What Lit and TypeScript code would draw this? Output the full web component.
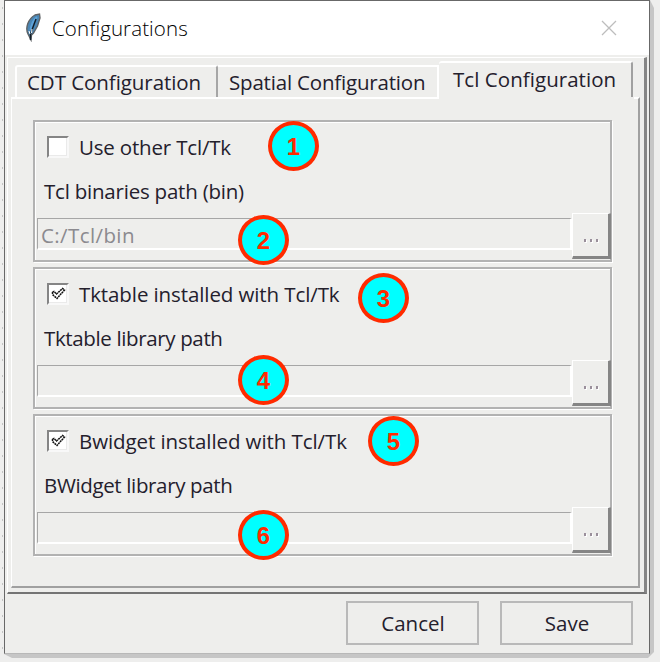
import { LitElement, html, css, svg } from "lit";
import { customElement } from "lit/decorators.js";
import { styleMap } from "lit/directives/style-map.js";

interface Section {
  option: string;
  checked: boolean;
  path: string;
  value: string;
  optionSpacing: number;
  pathSpacing: number;
}

const sections: Section[] = [
  { option: "Use other Tcl/Tk", checked: false, path: "Tcl binaries path (bin)", value: "C:/Tcl/bin", optionSpacing: -0.18, pathSpacing: -0.22 },
  { option: "Tktable installed with Tcl/Tk", checked: true, path: "Tktable library path", value: "", optionSpacing: -0.1, pathSpacing: -0.36 },
  { option: "Bwidget installed with Tcl/Tk", checked: true, path: "BWidget library path", value: "", optionSpacing: -0.08, pathSpacing: -0.36 },
];

// Callout pins: centre of each numbered marker.
const pins = [
  [293, 146], [263, 240], [383, 298], [263, 380], [393, 441], [263, 535],
];

@customElement("app-root")
export class AppRoot extends LitElement {
  static styles = css`
    :host { display: block; position: relative; width: 660px; height: 662px; overflow: hidden; background: #eeeeed;
      font-family: "Open Sans", "Noto Sans", sans-serif; font-size: 20.5px; color: #24202c; }
    * { box-sizing: border-box; }
    .desk { height: 662px; padding-left: 4px; background: radial-gradient(circle at 2.5px 8px, #c4c4c4 0.8px, transparent 1px) 0 0 / 4px 16px repeat-y; }
    .window { width: 646px; height: 654px; border: 1px solid #686868; border-bottom: 1px solid #b8b8b8; background: #eeeeec;
      box-shadow: 2px 2px 0 2px #c6c6c6; clip-path: polygon(0 0, 646px 0, 650px 8px, 650px 652px, 644px 658px, 8px 658px, 0 654px); }
    .title { height: 54px; background: #fff; display: flex; align-items: center; padding: 0 31px 0 19px; }
    .feather { width: 18px; height: 30px; margin-top: -2px; }
    .title span { margin-left: 10px; flex: 1; font-size: 20.5px; font-weight: 300; letter-spacing: 0.1px; color: #000; white-space: nowrap; }
    .close { width: 18px; height: 18px; margin-top: -1px; }
    .book { margin: 2px 2px 0 2px; height: 537px; border: 1px solid #fff; border-right: 3px solid #858585; border-bottom: 2px solid #747474;
      padding: 3px 4px 4px 3px; display: flex; flex-direction: column; }
    .tabs { height: 36px; display: flex; align-items: flex-end; padding-left: 4px; }
    .tab { height: 32px; border-top: 2px solid #fff; white-space: nowrap; display: flex; align-items: center; }
    .t1 { width: 203px; border-left: 2px solid #fff; border-right: 2px solid #a6a6a6; border-radius: 3px 3px 0 0; padding-left: 10px; }
    .t2 { width: 221px; border-right: 2px solid #fff; padding-left: 11px; }
    .t3 { width: 194px; height: 36px; border-right: 2px solid #a0a0a0; border-radius: 3px 3px 0 0; padding: 0 0 2px 14px; }
    .panel { flex: 1; border: 1px solid #fff; border-top-width: 2px; border-right: 2px solid #a0a0a0; border-bottom: 2px solid #a0a0a0; padding: 21px 0 0 21px; position: relative; }
    .seam { position: absolute; top: -2px; left: 427px; width: 195px; height: 2px; background: #eeeeec; }
    .group { width: 579px; height: 142px; margin-bottom: 5px; border: 2px solid #b2b2b2; padding-left: 2px; padding-top: 14px;
      box-shadow: inset 1px 1px 0 #fff, 1px 1px 0 #fff; }
    .option { display: flex; align-items: center; height: 22px; padding-left: 10px; }
    .check { width: 22px; height: 22px; flex: none; background: #fff; border: 2px solid #858585; border-right-color: #f8f8f8; border-bottom-color: #f8f8f8; display: block;
      box-shadow: inset -1px -1px 0 #eaeaea; }
    .check svg { display: block; width: 18px; height: 18px; }
    .label { white-space: nowrap; line-height: 24px; }
    .option .label { margin-left: 10px; }
    .path { padding-left: 7px; margin-top: 19px; height: 24px; }
    .row { display: flex; margin-top: 12px; height: 45px; align-items: flex-start; }
    .field { flex: none; width: 535px; height: 32px; margin-top: 5px; border: 1px solid #a6a6a6; border-right: 2px solid #fff; border-bottom: 2px solid #fff;
      color: #8b8a8f; line-height: 32px; padding-left: 3px; letter-spacing: 0.4px; }
    .browse { width: 39px; height: 46px; flex: none; border: 1px solid #fff; border-right: 3px solid #858585; border-bottom: 3px solid #858585;
      display: flex; align-items: center; justify-content: center; gap: 4px; padding-top: 11px; }
    .browse i { width: 2px; height: 3px; background: #9a8f9b; box-shadow: 1px 1px 0 #fff; }
    .foot { display: flex; justify-content: flex-end; gap: 21px; padding: 7px 16px 0 0; }
    .btn { height: 44px; border: 2px solid #b9b9b9; width: 133px; display: flex; align-items: center; justify-content: center; padding-left: 1px; }
    .pin { position: absolute; width: 51px; height: 50px; border-radius: 50%; border: 4px solid #ff2b00; background: #00ffff; color: #ff2b00;
      display: flex; align-items: center; justify-content: center; font: bold 24px/1 "Liberation Sans", sans-serif; padding-top: 1px; }
  `;

  private text(value: string, spacing = 0) {
    return html`<span class="label" style=${styleMap({ letterSpacing: `${spacing}px` })}>${value}</span>`;
  }

  private tick() {
    return svg`<svg viewBox="0 0 18 18"><path d="M3.5 7.5L5 6.5L7.5 9L13.5 3.5L15.5 5L8 13.5L3.5 9.5Z" fill="#fff" stroke="#111" stroke-width="1.5" stroke-dasharray="2 .6"/></svg>`;
  }

  render() {
    return html`
      <div class="desk">
        <div class="window">
          <div class="title">
            <svg class="feather" viewBox="0 0 18 30">
              <path d="M4 22C1 16 4 7 11 3L15.5 2L16 6L13.5 14L9.5 21L7.5 23L7 28L5.5 25Z" fill="#4b86b4" stroke="#5f6366" stroke-width="1.4"/>
              <path d="M13 5Q8 9 6.5 18" fill="none" stroke="#5fa3d9" stroke-width="2"/>
              <path d="M12 7L6.5 22L6.5 28" fill="none" stroke="#111d28" stroke-width="1.4"/>
              <path d="M5 19L6 22M8 17L7.5 21" stroke="#fff" stroke-width="1"/>
            </svg>
            <span>Configurations</span>
            <svg class="close" viewBox="0 0 18 18"><path d="M2 2L16 16M16 2L2 16" stroke="#bdbdbd" stroke-width="1.3"/></svg>
          </div>
          <div class="book">
            <div class="tabs">
              <div class="tab t1">${this.text("CDT Configuration", -0.06)}</div>
              <div class="tab t2">${this.text("Spatial Configuration", -0.19)}</div>
              <div class="tab t3">${this.text("Tcl Configuration", 0.05)}</div>
            </div>
            <div class="panel">
              <div class="seam"></div>
              ${sections.map((s) => html`
                <div class="group">
                  <div class="option"><span class="check">${s.checked ? this.tick() : ""}</span>${this.text(s.option, s.optionSpacing)}</div>
                  <div class="path">${this.text(s.path, s.pathSpacing)}</div>
                  <div class="row"><div class="field">${s.value}</div><div class="browse"><i></i><i></i><i></i></div></div>
                </div>`)}
            </div>
          </div>
          <div class="foot">
            <div class="btn">${this.text("Cancel")}</div>
            <div class="btn">${this.text("Save")}</div>
          </div>
        </div>
      </div>
      ${pins.map(([x, y], i) => html`<div class="pin" style=${styleMap({ left: `${x - 25}px`, top: `${y - 25}px` })}>${i + 1}</div>`)}
    `;
  }
}
